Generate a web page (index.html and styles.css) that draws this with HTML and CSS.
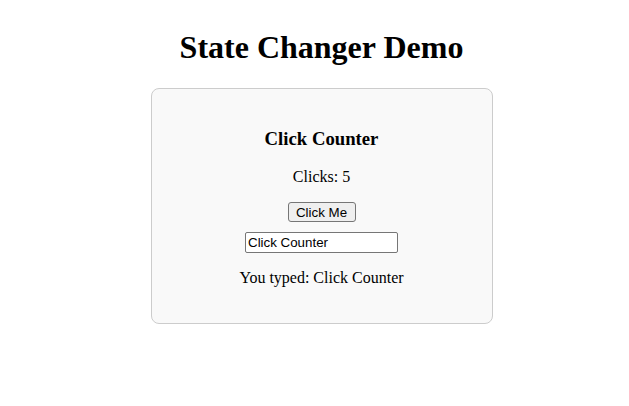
FILE: index.html
```html
<!DOCTYPE html>
<html>
<head>
<meta charset="utf-8">
<title>State Changer Demo</title>
<link rel="stylesheet" href="styles.css">
</head>
<body>
<h1 class="title">State Changer Demo</h1>
<div class="card">
  <h3 class="card-title">Click Counter</h3>
  <p class="count">Clicks: 5</p>
  <div class="row"><button class="btn" type="button">Click Me</button></div>
  <div class="row row-input"><input class="field" type="text" value="Click Counter"></div>
  <p class="typed">You typed: Click Counter</p>
</div>
</body>
</html>
```
FILE: styles.css
```css
html, body {
  background: #ffffff;
}
body {
  margin: 8px 0 8px 14px;
  font-family: "Liberation Serif", "Times New Roman", serif;
  color: #000;
  text-align: center;
}
.title {
  font-size: 32px;
  font-weight: bold;
  margin: 21.44px 0;
}
.card {
  box-sizing: border-box;
  width: 342px;
  margin: 0 auto;
  padding: 20px;
  border: 1px solid #cccccc;
  border-radius: 8px;
  background: #f9f9f9;
}
.card-title {
  font-size: 18.72px;
  font-weight: bold;
  margin: 18.72px 0;
}
.count, .typed {
  font-size: 16px;
  margin: 16px 0;
}
.row {
  display: flex;
  justify-content: center;
}
.row-input {
  margin-top: 10px;
}
.btn {
  box-sizing: border-box;
  height: 20px;
  width: 68px;
  padding: 0 6px;
  font-family: "Liberation Sans", Arial, sans-serif;
  font-size: 13.33px;
  color: #000;
  background: #efefef;
  border: 1px solid #767676;
  border-radius: 3px;
}
.field {
  box-sizing: border-box;
  width: 153px;
  height: 21px;
  padding: 1px 2px;
  font-family: "Liberation Sans", Arial, sans-serif;
  font-size: 13.33px;
  color: #000;
  background: #fff;
  border: 1px solid #767676;
  border-radius: 2px;
}
```
